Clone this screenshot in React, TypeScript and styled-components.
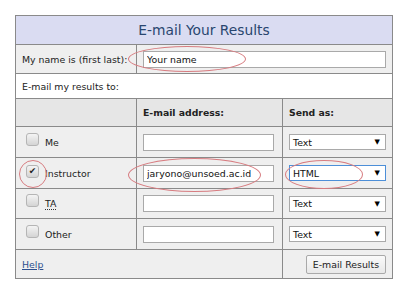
import React, { FC } from 'react';
import styled, { createGlobalStyle } from 'styled-components';

const GlobalStyle = createGlobalStyle`
  html, body {
    margin: 0;
    padding: 0;
    background: #ffffff;
    font-family: 'DejaVu Sans', Verdana, sans-serif;
  }
`;

const Page = styled.div`
  position: relative;
  width: 403px;
  height: 291px;
  padding: 15px 0 0 15px;
  box-sizing: border-box;
`;

const Table = styled.table`
  border-collapse: collapse;
  width: 377px;
  table-layout: fixed;
  font-size: 9.4px;
  color: #222;
  td, th {
    border: 1px solid #8a8a8a;
    padding: 0 6px;
    box-sizing: border-box;
    white-space: nowrap;
  }
`;

const TitleCell = styled.th`
  background: #dadcf2;
  height: 29px;
  font-size: 13.8px;
  font-weight: normal;
  color: #29466f;
  text-align: center;
`;

const Cell = styled.td<{ white?: boolean; h: number; align?: string }>`
  background: ${(p) => (p.white ? '#ffffff' : '#efefef')};
  height: ${(p) => p.h}px;
  text-align: ${(p) => p.align || 'left'};
`;

const HeadCell = styled.th<{ h: number }>`
  background: #e6e6e6;
  height: ${(p) => p.h}px;
  text-align: left;
  font-weight: bold;
  font-size: 9.3px;
`;

const TextBox = styled.input<{ w: number }>`
  width: ${(p) => p.w}px;
  height: 17px;
  box-sizing: border-box;
  border: 1px solid #a9a9a9;
  background: #fff;
  font-family: 'DejaVu Sans', Verdana, sans-serif;
  font-size: 9.4px;
  color: #111;
  padding: 0 3px;
  margin: 0;
  display: block;
`;

const Select = styled.div<{ focus?: boolean }>`
  display: flex;
  justify-content: space-between;
  align-items: center;
  width: 97px;
  height: 16px;
  box-sizing: border-box;
  border: 1px solid ${(p) => (p.focus ? '#4d8fd8' : '#a9a9a9')};
  background: #fff;
  padding: 0 5px 0 3px;
  font-size: 9.4px;
  color: #111;
  .arrow {
    font-size: 7px;
    color: #000;
  }
`;

const Option = styled.label`
  display: flex;
  align-items: center;
  gap: 6px;
  padding-left: 4px;
`;

const Box = styled.span<{ checked?: boolean }>`
  width: 11px;
  height: 11px;
  border: 1px solid #b5b5b5;
  border-radius: 3px;
  background: linear-gradient(#f4f4f4, #d4d4d4);
  display: inline-flex;
  align-items: center;
  justify-content: center;
  font-size: 9px;
  line-height: 1;
  color: #222;
  margin-top: ${(p) => (p.checked ? '-3px' : '-6px')};
`;

const Dotted = styled.span`
  border-bottom: 1px dotted #333;
`;

const HelpLink = styled.a`
  color: #2c4f8e;
  text-decoration: underline;
`;

const Button = styled.button`
  font-family: 'DejaVu Sans', Verdana, sans-serif;
  font-size: 9.4px;
  color: #222;
  height: 19px;
  padding: 0 6px;
  border: 1px solid #a9a9a9;
  border-radius: 2px;
  background: linear-gradient(#fafafa, #e8e8e8);
`;

const Ring = styled.div`
  position: absolute;
  border: 1px solid #d77c80;
  border-radius: 50%;
  pointer-events: none;
`;

type Rec = { label: React.ReactNode; email: string; format: string; checked?: boolean; focus?: boolean };

const rows: Rec[] = [
  { label: 'Me', email: '', format: 'Text' },
  { label: 'Instructor', email: 'jaryono@unsoed.ac.id', format: 'HTML', checked: true, focus: true },
  { label: <Dotted>TA</Dotted>, email: '', format: 'Text' },
  { label: 'Other', email: '', format: 'Text' },
];

const heights = [31, 31, 30, 31];

const App: FC = () => (
  <Page>
    <GlobalStyle />
    <Table>
      <colgroup>
        <col style={{ width: 121 }} />
        <col style={{ width: 146 }} />
        <col style={{ width: 110 }} />
      </colgroup>
      <tbody>
        <tr>
          <TitleCell colSpan={3}>E-mail Your Results</TitleCell>
        </tr>
        <tr>
          <Cell h={29}>My name is (first last):</Cell>
          <Cell h={29} colSpan={2}>
            <TextBox w={243} defaultValue="Your name" />
          </Cell>
        </tr>
        <tr>
          <Cell white h={25} colSpan={3}>E-mail my results to:</Cell>
        </tr>
        <tr>
          <HeadCell h={28} />
          <HeadCell h={28}>E-mail address:</HeadCell>
          <HeadCell h={28}>Send as:</HeadCell>
        </tr>
        {rows.map((r, i) => (
          <tr key={i}>
            <Cell h={heights[i]}>
              <Option>
                <Box checked={r.checked}>{r.checked ? '✔' : ''}</Box>
                {r.label}
              </Option>
            </Cell>
            <Cell h={heights[i]}>
              <TextBox w={131} defaultValue={r.email} />
            </Cell>
            <Cell h={heights[i]}>
              <Select focus={r.focus}>
                <span>{r.format}</span>
                <span className="arrow">▼</span>
              </Select>
            </Cell>
          </tr>
        ))}
        <tr>
          <Cell h={29} colSpan={2}>
            <HelpLink href="#">Help</HelpLink>
          </Cell>
          <Cell h={29} align="right">
            <Button>E-mail Results</Button>
          </Cell>
        </tr>
      </tbody>
    </Table>
    <Ring style={{ left: 128, top: 46, width: 116, height: 24 }} />
    <Ring style={{ left: 19, top: 160, width: 26, height: 26 }} />
    <Ring style={{ left: 128, top: 158, width: 131, height: 32 }} />
    <Ring style={{ left: 285, top: 160, width: 76, height: 27 }} />
  </Page>
);

export default App;
